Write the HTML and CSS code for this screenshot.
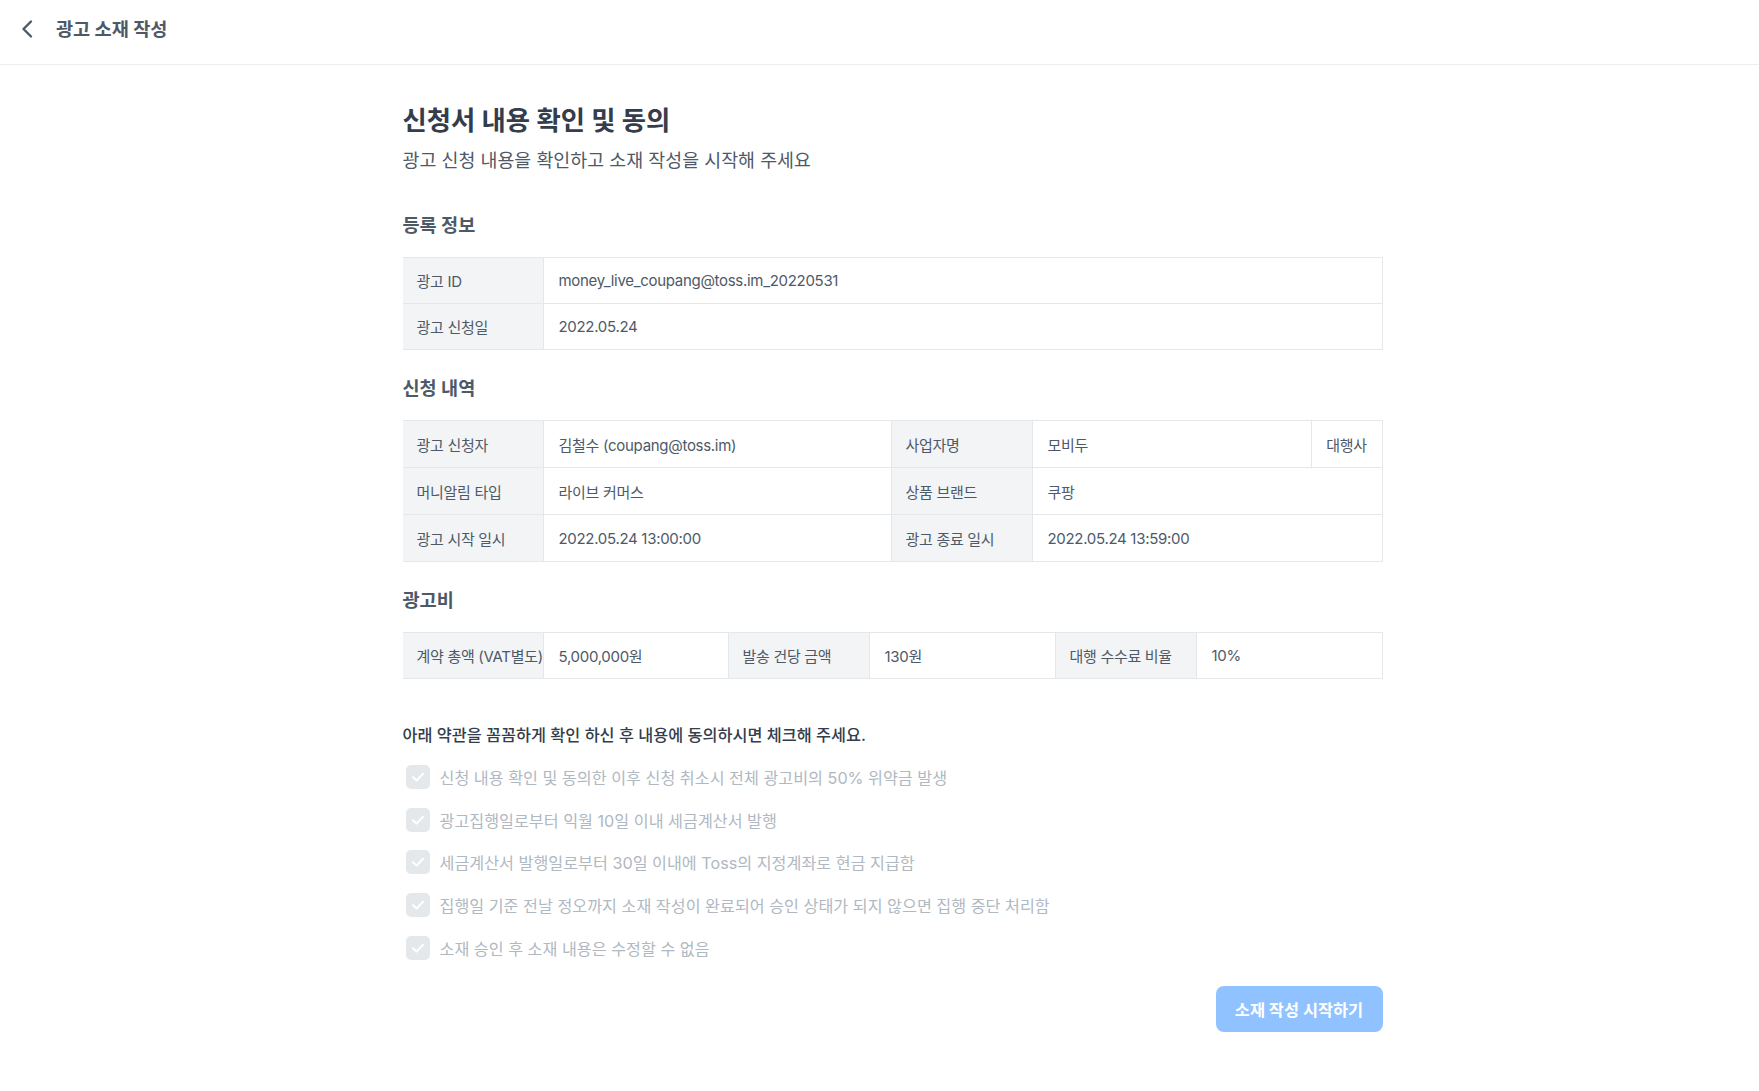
FILE: index.html
```html
<!DOCTYPE html>
<html lang="ko">
<head>
<meta charset="utf-8">
<title>광고 소재 작성</title>
<link rel="stylesheet" href="styles.css">
</head>
<body>
<header class="topbar">
  <svg class="back" viewBox="0 0 24 24" width="24" height="24" aria-hidden="true"><path d="M15 4.5 L7.5 12 L15 19.5" fill="none" stroke="#4e5968" stroke-width="2.4" stroke-linecap="round" stroke-linejoin="round"/></svg>
  <span class="topbar-title">광고 소재 작성</span>
</header>
<main class="page">
  <div class="content">
    <h1 class="title">신청서 내용 확인 및 동의</h1>
    <p class="subtitle">광고 신청 내용을 확인하고 소재 작성을 시작해 주세요</p>

    <h2 class="section-head first">등록 정보</h2>
    <div class="table t1">
      <div class="row">
        <div class="cell label">광고 ID</div>
        <div class="cell value">money_live_coupang@toss.im_20220531</div>
      </div>
      <div class="row">
        <div class="cell label">광고 신청일</div>
        <div class="cell value">2022.05.24</div>
      </div>
    </div>

    <h2 class="section-head">신청 내역</h2>
    <div class="table t2">
      <div class="row">
        <div class="cell label">광고 신청자</div>
        <div class="cell value">김철수 (coupang@toss.im)</div>
        <div class="cell label">사업자명</div>
        <div class="cell value">모비두</div>
        <div class="cell value center">대행사</div>
      </div>
      <div class="row">
        <div class="cell label">머니알림 타입</div>
        <div class="cell value">라이브 커머스</div>
        <div class="cell label">상품 브랜드</div>
        <div class="cell value span2">쿠팡</div>
      </div>
      <div class="row">
        <div class="cell label">광고 시작 일시</div>
        <div class="cell value">2022.05.24 13:00:00</div>
        <div class="cell label">광고 종료 일시</div>
        <div class="cell value span2">2022.05.24 13:59:00</div>
      </div>
    </div>

    <h2 class="section-head">광고비</h2>
    <div class="table t3">
      <div class="row">
        <div class="cell label">계약 총액 (VAT별도)</div>
        <div class="cell value">5,000,000원</div>
        <div class="cell label">발송 건당 금액</div>
        <div class="cell value">130원</div>
        <div class="cell label">대행 수수료 비율</div>
        <div class="cell value">10%</div>
      </div>
    </div>

    <p class="notice">아래 약관을 꼼꼼하게 확인 하신 후 내용에 동의하시면 체크해 주세요.</p>
    <ul class="terms">
      <li class="term"><span class="check"><svg viewBox="0 0 24 24" width="24" height="24"><path d="M7 12.2 L10.6 15.6 L17 8.8" fill="none" stroke="#fff" stroke-width="2" stroke-linecap="round" stroke-linejoin="round"/></svg></span>신청 내용 확인 및 동의한 이후 신청 취소시 전체 광고비의 50% 위약금 발생</li>
      <li class="term"><span class="check"><svg viewBox="0 0 24 24" width="24" height="24"><path d="M7 12.2 L10.6 15.6 L17 8.8" fill="none" stroke="#fff" stroke-width="2" stroke-linecap="round" stroke-linejoin="round"/></svg></span>광고집행일로부터 익월 10일 이내 세금계산서 발행</li>
      <li class="term"><span class="check"><svg viewBox="0 0 24 24" width="24" height="24"><path d="M7 12.2 L10.6 15.6 L17 8.8" fill="none" stroke="#fff" stroke-width="2" stroke-linecap="round" stroke-linejoin="round"/></svg></span>세금계산서 발행일로부터 30일 이내에 Toss의 지정계좌로 현금 지급함</li>
      <li class="term"><span class="check"><svg viewBox="0 0 24 24" width="24" height="24"><path d="M7 12.2 L10.6 15.6 L17 8.8" fill="none" stroke="#fff" stroke-width="2" stroke-linecap="round" stroke-linejoin="round"/></svg></span>집행일 기준 전날 정오까지 소재 작성이 완료되어 승인 상태가 되지 않으면 집행 중단 처리함</li>
      <li class="term"><span class="check"><svg viewBox="0 0 24 24" width="24" height="24"><path d="M7 12.2 L10.6 15.6 L17 8.8" fill="none" stroke="#fff" stroke-width="2" stroke-linecap="round" stroke-linejoin="round"/></svg></span>소재 승인 후 소재 내용은 수정할 수 없음</li>
    </ul>
    <div class="actions">
      <button class="start-btn" type="button" disabled>소재 작성 시작하기</button>
    </div>
  </div>
</main>
</body>
</html>
```
FILE: styles.css
```css
* { box-sizing: border-box; }
html, body { margin: 0; padding: 0; background: #fff; }
body {
  font-family: Inter, "Noto Sans CJK KR", "Noto Sans", sans-serif;
  color: #4e5968;
}

.topbar {
  height: 65px;
  border-bottom: 1px solid #eceef1;
  display: flex;
  align-items: flex-start;
  padding: 16px 0 0 16px;
  gap: 16px;
}
.back { margin-top: 1px; flex: none; }
.topbar-title {
  font-size: 18.6px;
  font-weight: 700;
  line-height: 26px;
  color: #4e5968;
}

.page {
  display: flex;
  justify-content: center;
  padding: 37px 0 60px 26px;
}
.content { width: 980px; }

.title {
  margin: 0;
  font-size: 26.4px;
  line-height: 36px;
  font-weight: 700;
  color: #333d4b;
}
.subtitle {
  margin: 9px 0 0;
  font-size: 18.4px;
  line-height: 26px;
  color: #4e5968;
}

.section-head {
  margin: 25px 0 19px;
  font-size: 18.6px;
  line-height: 26px;
  font-weight: 700;
  color: #4e5968;
}
.section-head.first { margin-top: 39px; }

.table {
  border-top: 1px solid #e5e8eb;
  border-right: 1px solid #e5e8eb;
  font-size: 15px;
}
.row {
  display: grid;
  height: 46px;
  border-bottom: 1px solid #e5e8eb;
}
.t2 .row { height: 47px; }
.t1 .row { grid-template-columns: 140px 1fr; }
.t2 .row { grid-template-columns: 140px 348px 141px 1fr 71px; }
.t3 .row { grid-template-columns: 140px 185px 141px 186px 141px 1fr; }

.cell {
  display: flex;
  align-items: center;
  padding: 0 14px 0 15px;
  white-space: nowrap;
  letter-spacing: -0.3px;
}
.cell.label {
  background: #f2f4f6;
  color: #4e5968;
  padding-left: 14px;
}
.cell.value {
  background: #fff;
  color: #4e5968;
  border-left: 1px solid #e5e8eb;
}
.cell.label + .cell.value,
.cell.value + .cell.label { border-left: 1px solid #e5e8eb; }
.cell.center { justify-content: center; padding: 0; }
.cell.span2 { grid-column: span 2; }

.notice {
  margin: 44px 0 0;
  font-size: 16.3px;
  line-height: 24px;
  font-weight: 500;
  color: #333d4b;
}
.terms {
  list-style: none;
  margin: 18px 0 0;
  padding: 0;
  display: flex;
  flex-direction: column;
  gap: 18.7px;
}
.term {
  display: flex;
  align-items: center;
  height: 24px;
  gap: 10px;
  font-size: 16.2px;
  color: #b0b8c1;
  padding-left: 3px;
}
.check {
  width: 24px;
  height: 24px;
  border-radius: 5px;
  background: #e5e8eb;
  display: flex;
  flex: none;
}

.actions {
  display: flex;
  justify-content: flex-end;
  margin-top: 26px;
}
.start-btn {
  width: 167px;
  height: 46px;
  border: none;
  border-radius: 8px;
  background: #90c2ff;
  color: #fff;
  font-family: inherit;
  font-size: 16.4px;
  font-weight: 700;
}
```
